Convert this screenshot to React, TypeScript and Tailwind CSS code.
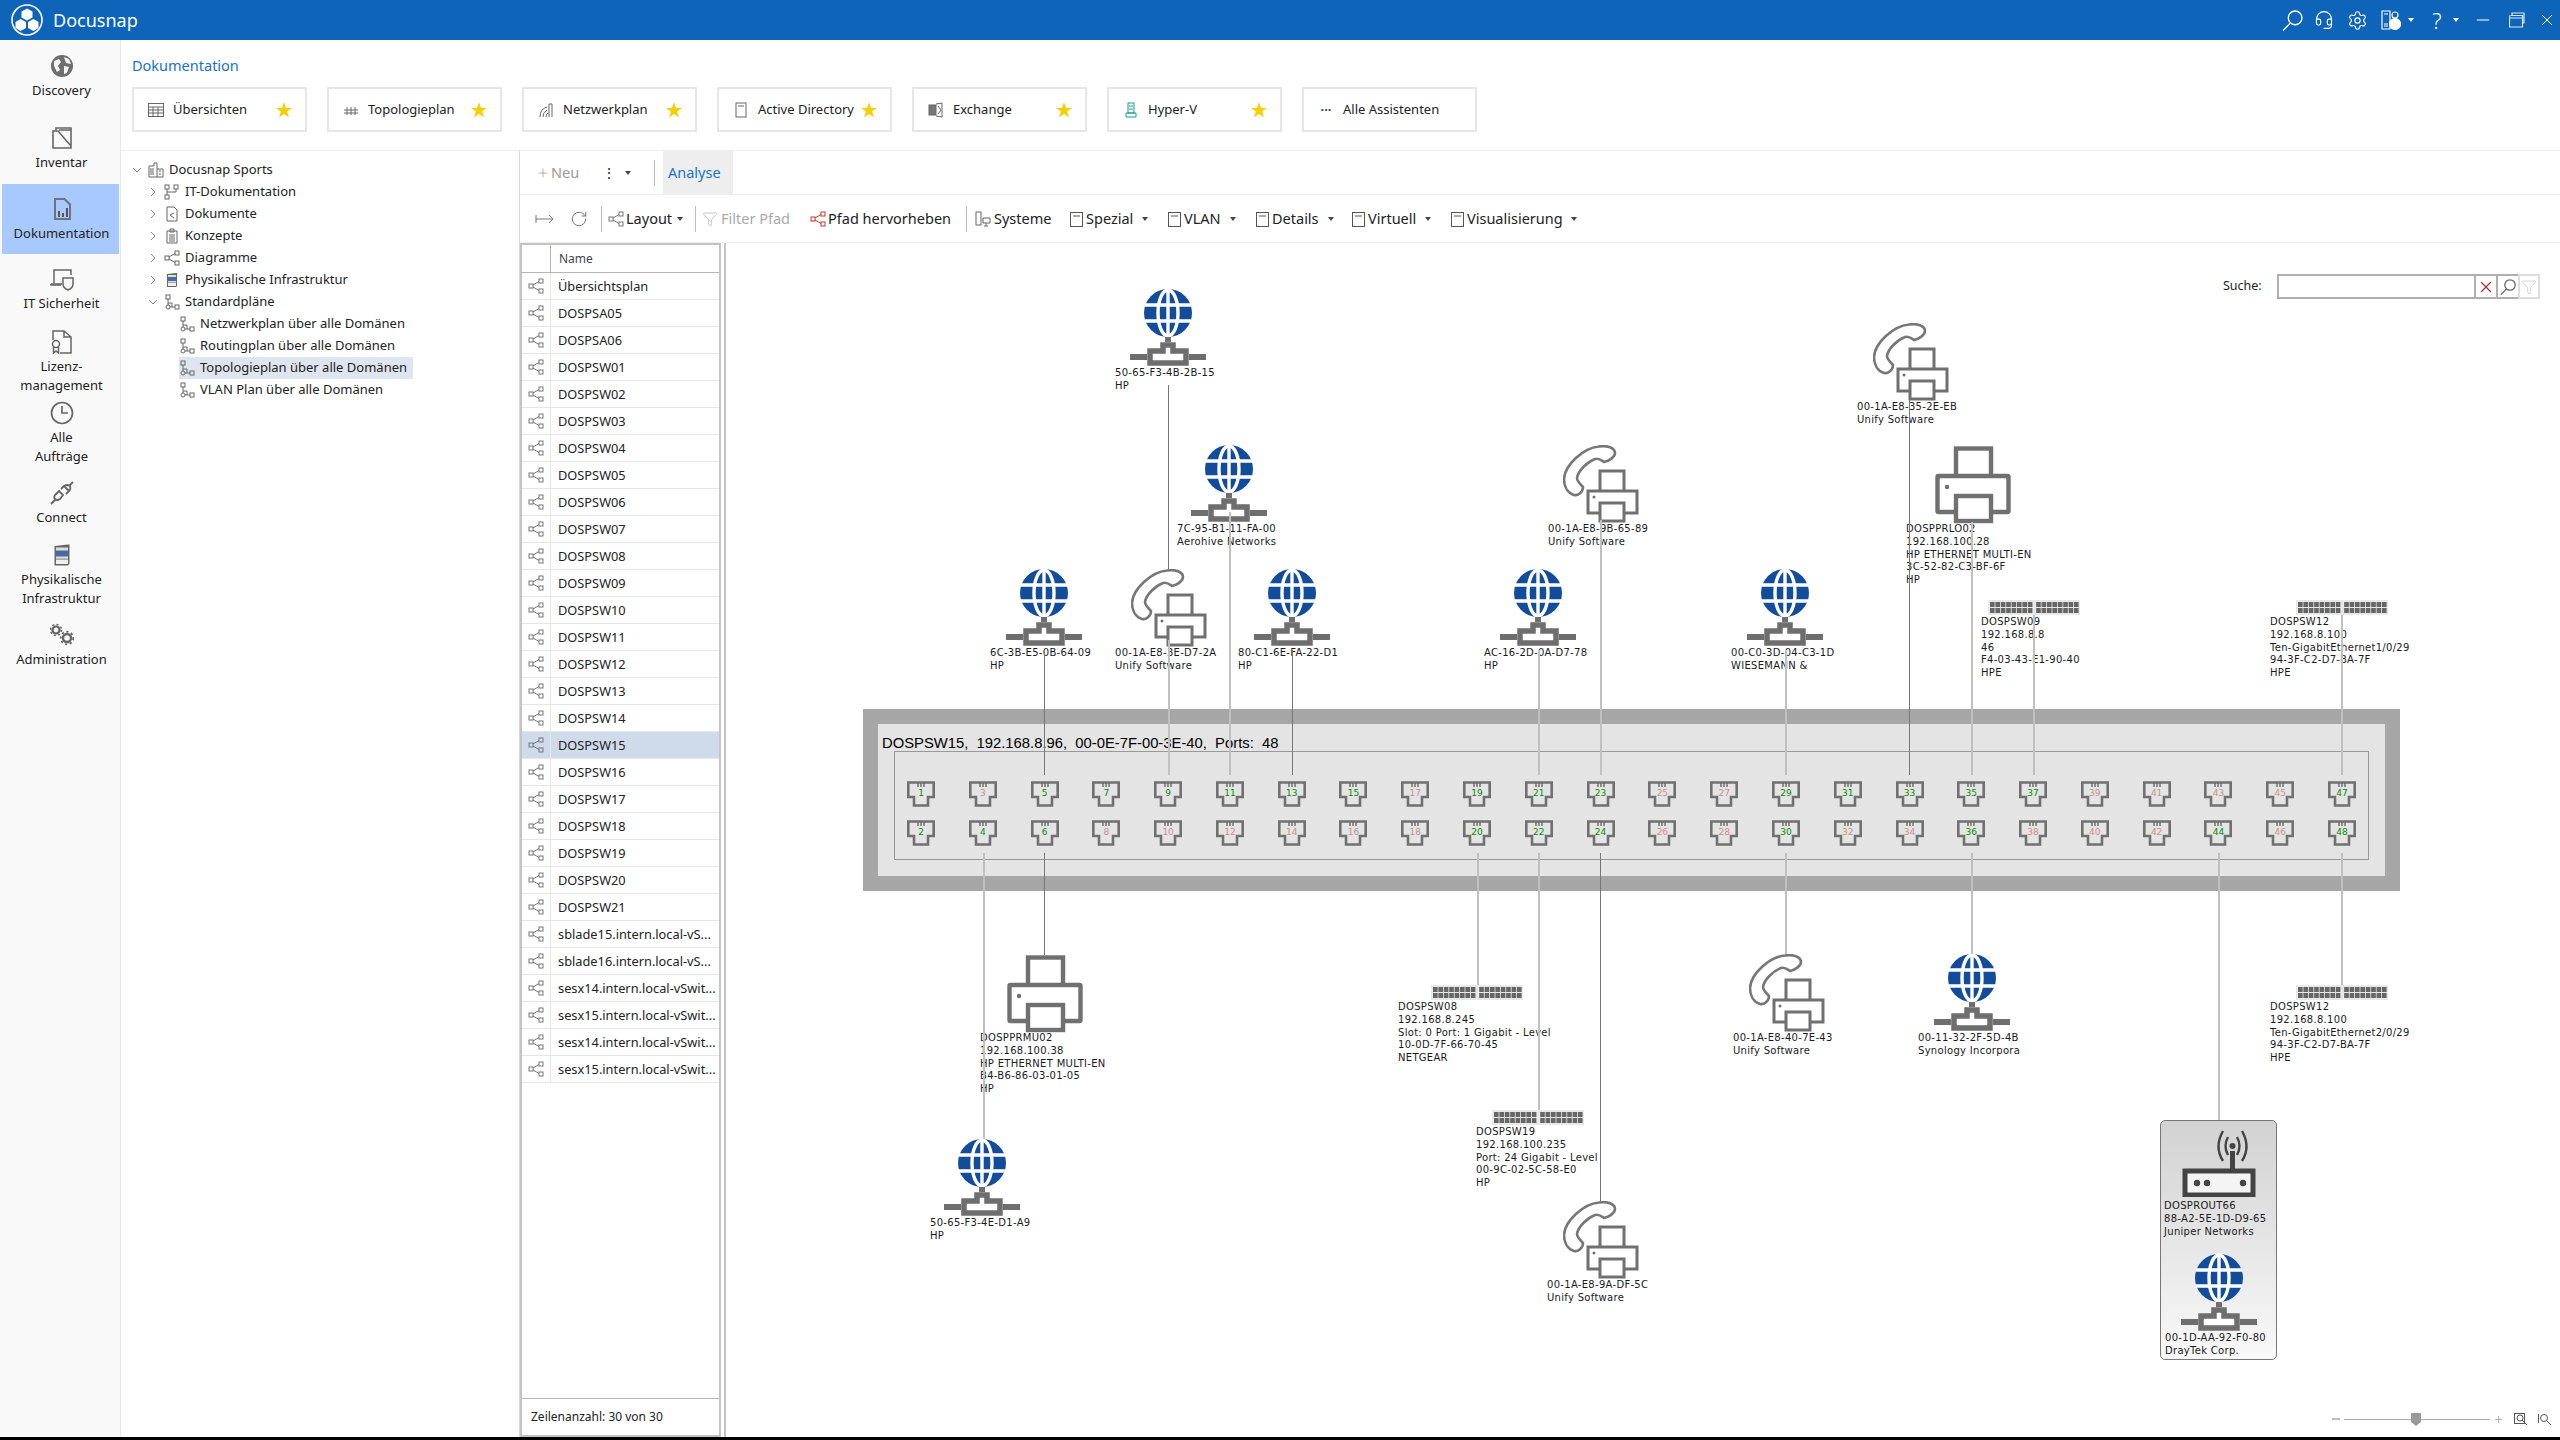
import React from 'react';
import { Headset, Settings, Minus, X, Plus, RotateCw, Filter } from 'lucide-react';

const OX = 726;
const OY = 243;
const labelFont = { fontFamily: '"DejaVu Sans", sans-serif' };

function Ico({ children, size = 16, className = '' }: { children: React.ReactNode; size?: number; className?: string }) {
  return (
    <svg width={size} height={size} viewBox="0 0 16 16" fill="none" stroke="#666" strokeWidth="1" className={`shrink-0 ${className}`}>
      {children}
    </svg>
  );
}

const ShareIco = ({ className = '', color = '#777' }: { className?: string; color?: string }) => (
  <Ico className={className}>
    <g stroke={color}>
      <rect x="1" y="6" width="4" height="4" />
      <rect x="11" y="1" width="4" height="4" />
      <rect x="11" y="11" width="4" height="4" />
      <path d="M5 7 L11 3.5 M5 9 L11 12.5" />
    </g>
  </Ico>
);

const TopoIco = () => (
  <Ico>
    <rect x="2" y="1" width="4" height="4" />
    <circle cx="4" cy="13" r="2" />
    <rect x="11" y="11" width="4" height="4" />
    <path d="M4 5 V11 M6 13 H11 M4 9 H8 V13" />
  </Ico>
);

const RackIco = ({ size = 16 }: { size?: number }) => (
  <svg width={size} height={size} viewBox="0 0 16 16" className="shrink-0">
    <path d="M3 2 L12 1 L13 1 V14 L12 15 H3Z" fill="#666" />
    <rect x="4" y="3" width="8" height="2" fill="#ddd" />
    <rect x="4" y="5.5" width="8" height="3" fill="#3f6db5" />
    <rect x="4" y="9" width="8" height="1.5" fill="#ddd" />
    <rect x="4" y="11" width="8" height="3" fill="#eee" />
  </svg>
);

// magnifier with the glass top right and the handle running down left
const Loupe = ({ size, color, width = 1.3 }: { size: number; color: string; width?: number }) => (
  <svg width={size} height={size} viewBox="0 0 20 20" fill="none" stroke={color} strokeWidth={width}>
    <circle cx="12.5" cy="7.5" r="6.5" />
    <path d="M8 12.5 L1 19.5" />
  </svg>
);

const rail = [
  { h: 'h-[72px]', lines: ['Discovery'], icon: (
    <svg width="24" height="24" viewBox="0 0 24 24"><circle cx="12" cy="12" r="11" fill="#6e6e6e" /><path d="M4 7 L9 5 L11 8 L8 12 L10 16 L7 18 L4 12Z M14 3 L19 5 L21 10 L16 9Z M14 12 L19 13 L17 19 L14 20Z" fill="#f4f4f4" /></svg>
  ) },
  { h: 'h-[71px]', lines: ['Inventar'], icon: (
    <svg width="24" height="24" viewBox="0 0 24 24" fill="none" stroke="#666" strokeWidth="1.6"><path d="M3 22 V5 H8 L21 20 V22Z M6 5 V2 H21 V20 M21 4 H9" /></svg>
  ) },
  { h: 'h-[70px]', active: true, lines: ['Dokumentation'], icon: (
    <svg width="24" height="24" viewBox="0 0 24 24"><path d="M4 1 H15 L21 7 V23 H4Z" fill="#6c7480" /><path d="M6 3 H14 L19 8 V21 H6Z" fill="#a8c9fe" /><path d="M8 14 H10 V20 H8Z M12 16 H14 V20 H12Z M16 11 H18 V20 H16Z" fill="#555" /></svg>
  ) },
  { h: 'h-[63px]', lines: ['IT Sicherheit'], icon: (
    <svg width="24" height="24" viewBox="0 0 24 24" fill="none" stroke="#666" strokeWidth="1.5"><path d="M4 16 V3 H21 V8 M1 17 H12 M1 17 V18 H11 M13 11 H23 V17 Q23 21 18 23 Q13 21 13 17Z" /></svg>
  ) },
  { h: 'h-[71px]', lines: ['Lizenz-', 'management'], icon: (
    <svg width="24" height="24" viewBox="0 0 24 24" fill="none" stroke="#666" strokeWidth="1.5"><path d="M3 10 V1 H14 L21 7 V23 H10 M14 1 V7 H21" /><circle cx="6" cy="14" r="3.5" /><path d="M3.5 17 V23 L6 21 L8.5 23 V17" /></svg>
  ) },
  { h: 'h-[80px]', lines: ['Alle', 'Aufträge'], icon: (
    <svg width="24" height="24" viewBox="0 0 24 24" fill="none" stroke="#666" strokeWidth="1.7"><circle cx="12" cy="12" r="10.5" /><path d="M12 5 V12 H18" /></svg>
  ) },
  { h: 'h-[62px]', lines: ['Connect'], icon: (
    <svg width="24" height="24" viewBox="0 0 24 24" fill="none" stroke="#666" strokeWidth="1.8"><path d="M1 23 L5 19 M23 1 L20 4 M9 10 L13 14 L10 18 Q7 20 5 18 Q3 16 6 13Z M14 5 L19 10 Q21 8 20 5 Q18 3 14 5Z M14 5 L11 8 M19 10 L16 13" /></svg>
  ) },
  { h: 'h-[80px]', lines: ['Physikalische', 'Infrastruktur'], icon: <RackIco size={24} /> },
  { h: 'h-[60px]', lines: ['Administration'], icon: (
    <svg width="24" height="24" viewBox="0 0 24 24" fill="none" stroke="#666"><circle cx="6" cy="7" r="3.5" strokeWidth="2.2" /><circle cx="6" cy="7" r="5.5" strokeWidth="1.6" strokeDasharray="2 2.3" /><circle cx="17" cy="15" r="4" strokeWidth="2.4" /><circle cx="17" cy="15" r="6.3" strokeWidth="1.8" strokeDasharray="2.2 2.5" /></svg>
  ) },
];

const Star = () => (
  <svg width="16" height="16" viewBox="0 0 16 16" className="shrink-0"><path d="M8 0 L10 5.8 L16 6 L11.2 9.6 L13 15.6 L8 12 L3 15.6 L4.8 9.6 L0 6 L6 5.8Z" fill="#f4d00c" /></svg>
);

const tiles = [
  { t: 'Übersichten', i: <Ico><rect x="0.5" y="1.5" width="15" height="13" /><path d="M0.5 5 H15.5 M0.5 8 H15.5 M0.5 11 H15.5 M5 5 V14.5 M10 5 V14.5" /></Ico> },
  { t: 'Topologieplan', i: <Ico><path d="M1 8 H15 M1 11 H15 M4 5 V13 M8 5 V13 M12 5 V13" /></Ico> },
  { t: 'Netzwerkplan', i: <Ico><path d="M2 15 Q2 7 9 5 M5 15 Q5 10 9 8 M8 15 Q8 12 10 11 M11 15 V2 H14 V15" /></Ico> },
  { t: 'Active Directory', i: <Ico><rect x="3" y="1" width="10" height="14" /><path d="M5 4 H11" /></Ico> },
  { t: 'Exchange', i: <Ico><rect x="1" y="3" width="7" height="10" fill="#777" /><path d="M8 2 L14 1 V15 L8 14 M10 4 L13 8 L10 12" /></Ico> },
  { t: 'Hyper-V', i: <Ico><g stroke="#1b9a94"><rect x="5" y="1" width="6" height="10" /><path d="M6 4 H10 M6 7 H10 M3 11 H13 V15 H3Z" /></g></Ico> },
  { t: 'Alle Assistenten', more: true, i: <span className="w-4 text-center font-bold leading-none text-[#444]">···</span> },
];

const tree = [
  { level: 0, chev: 'open', t: 'Docusnap Sports', i: <Ico><path d="M1 15 V4 H6 V1 H9 V15 M9 7 H15 V15 M1 15 H15 M3 6 V13 M5 6 V13 M11 9 H13 M11 12 H13" /></Ico> },
  { level: 1, chev: 'closed', t: 'IT-Dokumentation', i: <Ico><rect x="1" y="1" width="4" height="4" /><rect x="10" y="1" width="4" height="4" /><rect x="1" y="11" width="4" height="4" /><path d="M3 5 V11 M3 8 H12 V5" /></Ico> },
  { level: 1, chev: 'closed', t: 'Dokumente', i: <Ico><path d="M3 1 H10 L13 4 V15 H3Z" /><path d="M6 9 L10 7 M6 9 L10 12" /></Ico> },
  { level: 1, chev: 'closed', t: 'Konzepte', i: <Ico><path d="M3 3 H13 V15 H3Z M6 1 H10 V4 H6Z M5 7 H11 M5 9 H11 M5 11 H11 M5 13 H11" /></Ico> },
  { level: 1, chev: 'closed', t: 'Diagramme', i: <ShareIco color="#666" /> },
  { level: 1, chev: 'closed', t: 'Physikalische Infrastruktur', i: <RackIco /> },
  { level: 1, chev: 'open', t: 'Standardpläne', i: <TopoIco /> },
  { level: 2, t: 'Netzwerkplan über alle Domänen', i: <TopoIco /> },
  { level: 2, t: 'Routingplan über alle Domänen', i: <TopoIco /> },
  { level: 2, sel: true, t: 'Topologieplan über alle Domänen', i: <TopoIco /> },
  { level: 2, t: 'VLAN Plan über alle Domänen', i: <TopoIco /> },
];

const listRows = [
  'Übersichtsplan', 'DOSPSA05', 'DOSPSA06',
  ...Array.from({ length: 21 }, (_, n) => `DOSPSW${String(n + 1).padStart(2, '0')}`),
  'sblade15.intern.local-vS...', 'sblade16.intern.local-vS...', 'sesx14.intern.local-vSwit...',
  'sesx15.intern.local-vSwit...', 'sesx14.intern.local-vSwit...', 'sesx15.intern.local-vSwit...',
];

const green = new Set([1, 2, 4, 5, 6, 7, 9, 11, 13, 15, 19, 20, 21, 22, 23, 24, 29, 30, 31, 33, 35, 36, 37, 44, 47, 48]);

function Port({ n }: { n: number }) {
  return (
    <div className="relative h-[26px] w-[28px]">
      <svg width="28" height="26" viewBox="0 0 28 26" fill="none" stroke="#707070" strokeWidth="2.6">
        <path d="M1.3 1.5 H26.7 V16 H21 V24.5 H7 V16 H1.3Z" />
        <path d="M11 1 V6 M14 1 V6 M17 1 V6" strokeWidth="1.5" />
      </svg>
      <span
        style={labelFont}
        className={`absolute inset-x-0 top-[6px] text-center text-[9px] leading-[13px] ${green.has(n) ? 'text-[#078a07]' : 'text-[#c09292]'}`}
      >
        {n}
      </span>
    </div>
  );
}

// lines: x, from y, to y, dark = the thin darker ones
const lines = [
  { x: 1168, a: 385, b: 569, dark: true },
  { x: 1168, a: 640, b: 775 },
  { x: 1229, a: 512, b: 775 },
  { x: 1292, a: 650, b: 775, dark: true },
  { x: 1044, a: 650, b: 775, dark: true },
  { x: 1538, a: 650, b: 775 },
  { x: 1600, a: 520, b: 775 },
  { x: 1785, a: 650, b: 775 },
  { x: 1909, a: 400, b: 775, dark: true },
  { x: 1971, a: 522, b: 775 },
  { x: 2033, a: 615, b: 775 },
  { x: 2341, a: 615, b: 775 },
  { x: 983, a: 853, b: 1139 },
  { x: 1044, a: 853, b: 955, dark: true },
  { x: 1477, a: 853, b: 985 },
  { x: 1538, a: 853, b: 1110 },
  { x: 1600, a: 853, b: 1201, dark: true },
  { x: 1785, a: 853, b: 954 },
  { x: 1971, a: 853, b: 954 },
  { x: 2218, a: 853, b: 1120 },
  { x: 2341, a: 853, b: 985 },
];

function Label({ x, y, lines: text }: { x: number; y: number; lines: string[] }) {
  return (
    <div
      style={{ ...labelFont, left: x - OX, top: y - OY - 5 }}
      className="absolute whitespace-nowrap text-[10px] leading-[12.8px] tracking-[0.3px] text-[#1a1a1a]"
    >
      {text.map((t) => (
        <div key={t}>{t}</div>
      ))}
    </div>
  );
}

function GlobeGlyph() {
  return (
    <svg width="80" height="80" viewBox="-40 -26 80 80" className="block">
      <circle r="24" fill="#144c9c" />
      <g fill="none" stroke="#fff" strokeWidth="3.4">
        <ellipse rx="10" ry="23" />
        <path d="M0 -24 V24 M-23 -8 H23 M-23 8 H23" />
      </g>
      <g stroke="#6e6e6e" fill="none">
        <path d="M-3 24 H3 V29 H-3Z" fill="#6e6e6e" strokeWidth="0" />
        <path d="M-38 44 H-21 M21 44 H38" strokeWidth="6" />
        <path d="M-18 50 V38 H-5 V32 H5 V38 H18 V50Z" strokeWidth="5.5" fill="#fff" />
      </g>
    </svg>
  );
}

function Globe({ cx, cy, text, lx }: { cx: number; cy: number; text: string[]; lx: number }) {
  return (
    <>
      <div style={{ left: cx - 40 - OX, top: cy - 26 - OY }} className="absolute">
        <GlobeGlyph />
      </div>
      <Label x={lx} y={cy + 59} lines={text} />
    </>
  );
}

function PhonePrinter({ cx, top, text, lx }: { cx: number; top: number; text: string[]; lx: number }) {
  return (
    <>
      <svg width="76" height="78" viewBox="0 0 76 78" style={{ left: cx - 37 - OX, top: top - OY }} className="absolute">
        <path
          d="M36 1.5 C44 0 52 3 52 8 C52 12 46 16 41 17 C38 15 36 13 32 14 C24 17 15 26 14 33 C14 36 17 39 20 42 C20 47 15 51 11 50 C5 48 1 42 1 34 C2 20 20 3 36 1.5Z"
          fill="#fff"
          stroke="#777"
          strokeWidth="2.6"
        />
        <g fill="#fff" stroke="#707070" strokeWidth="3">
          <rect x="37" y="26" width="24" height="22" />
          <rect x="25" y="46" width="49" height="22" />
          <rect x="37" y="58" width="24" height="18" />
        </g>
        <circle cx="31" cy="52" r="1.5" fill="#707070" />
      </svg>
      <Label x={lx} y={top + 83} lines={text} />
    </>
  );
}

function Printer({ x, y, text, lx }: { x: number; y: number; text: string[]; lx: number }) {
  return (
    <>
      <svg width="76" height="78" viewBox="0 0 76 78" style={{ left: x - OX, top: y - OY }} className="absolute">
        <g fill="#fff" stroke="#707070" strokeWidth="4.4">
          <rect x="21" y="2.5" width="35" height="30" />
          <rect x="2.5" y="30" width="71" height="36" rx="1" />
          <rect x="21" y="50" width="35" height="25" />
        </g>
        <circle cx="12" cy="41" r="2.2" fill="#707070" />
      </svg>
      <Label x={lx} y={y + 82} lines={text} />
    </>
  );
}

function MiniSwitch({ x, y, text, lx }: { x: number; y: number; text: string[]; lx: number }) {
  const dots = Array.from({ length: 16 }, (_, i) => i);
  return (
    <>
      <svg width="92" height="15" viewBox="0 0 92 15" style={{ left: x - OX, top: y - OY }} className="absolute">
        <rect width="92" height="15" fill="#e8e8e8" />
        {dots.map((i) => {
          const dx = 2 + i * 5.4 + (i >= 8 ? 3 : 0);
          return (
            <g key={i} fill="#666">
              <rect x={dx} y="2" width="4.6" height="5" />
              <rect x={dx} y="8" width="4.6" height="5" />
            </g>
          );
        })}
      </svg>
      <Label x={lx} y={y + 21} lines={text} />
    </>
  );
}

function Tool({ className, children }: { className: string; children: React.ReactNode }) {
  return <div className={`flex h-full shrink-0 items-center ${className}`}>{children}</div>;
}

const Caret = ({ className = '' }: { className?: string }) => (
  <span className={`h-0 w-0 border-x-[3px] border-t-[4px] border-x-transparent border-t-[#444] ${className}`} />
);

const BoxIco = () => (
  <svg width="13" height="16" viewBox="0 0 13 16" fill="none" stroke="#555" className="shrink-0">
    <rect x="0.5" y="1.5" width="12" height="14" />
    <path d="M3 5 H10" />
  </svg>
);

const Sep = () => <div className="h-[26px] w-px shrink-0 bg-[#bbb]" />;

export default function App() {
  return (
    <div
      style={{ fontFamily: '"Noto Sans", sans-serif' }}
      className="flex h-[1440px] w-[2560px] flex-col overflow-hidden bg-white text-[13px] text-[#222]"
    >
      {/* Title bar */}
      <header className="flex h-10 shrink-0 items-center bg-[#0d64b9] text-white">
        <svg width="32" height="32" viewBox="0 0 32 32" className="ml-[11px]">
          <circle cx="16" cy="16" r="15" fill="none" stroke="#fff" strokeWidth="1.6" />
          <path d="M16 4.5 L21.5 7.5 V13.5 L16 16.5 L10.5 13.5 V7.5Z M9.5 15 L15 18 V24 L9.5 27 L4.5 24 V18Z M22.5 15 L27.5 18 V24 L22.5 27 L17 24 V18Z" fill="#fff" />
        </svg>
        <span className="ml-[10px] text-[18px] leading-none">Docusnap</span>
        <div className="ml-auto flex h-full items-center">
          <div className="flex w-[32px] justify-center"><Loupe size={21} color="#fff" /></div>
          <div className="flex w-[32px] justify-center"><Headset size={20} strokeWidth={1.4} /></div>
          <div className="flex w-[34px] justify-center"><Settings size={21} strokeWidth={1.3} /></div>
          <div className="flex w-[34px] justify-center">
            <svg width="20" height="20" viewBox="0 0 20 20" fill="none" stroke="#fff" strokeWidth="1.2">
              <path d="M1 1 H9 V19 H1Z M3 4 H7 M3 14 H7 M3 16 H7" />
              <circle cx="14" cy="5" r="3" />
              <circle cx="14" cy="14" r="5.5" fill="#fff" />
            </svg>
          </div>
          <Caret className="mr-[15px] border-t-white" />
          <span className="w-[16px] text-center text-[22px] font-light leading-none">?</span>
          <Caret className="ml-[8px] border-t-white" />
          <div className="ml-[7px] flex w-[34px] justify-center"><Minus size={20} strokeWidth={1.2} /></div>
          <div className="flex w-[34px] justify-center">
            <svg width="16" height="16" viewBox="0 0 16 16" fill="none" stroke="#d7e4f3" strokeWidth="1.2">
              <path d="M3 3 V1 H15 V11 H13 M1.5 3.5 H13.5 V15 H0.5 V3.5 M0.5 6 H13.5" />
            </svg>
          </div>
          <div className="flex w-[26px] justify-center"><X size={18} strokeWidth={1.3} /></div>
        </div>
      </header>

      <div className="flex min-h-0 flex-1">
        {/* Left rail */}
        <nav className="flex w-[121px] shrink-0 flex-col border-r border-[#e8e8e8] bg-[#f9f9f9] pt-px">
          {rail.map((r) => (
            <div
              key={r.lines[0]}
              className={`ml-[2px] mr-px flex shrink-0 flex-col items-center pl-[2px] pt-[13px] text-center leading-[19px] text-[#222] ${r.h} ${r.active ? 'bg-[#a8c9fe]' : ''}`}
            >
              <div className="mb-[3px] h-6">{r.icon}</div>
              {r.lines.map((l) => (
                <div key={l} className="whitespace-nowrap">{l}</div>
              ))}
            </div>
          ))}
        </nav>

        <main className="flex min-w-0 flex-1 flex-col">
          {/* Tiles */}
          <section className="h-[110px] shrink-0 pl-[11px]">
            <h1 className="pt-[14px] text-[14.5px] leading-[22px] text-[#1873c9]">Dokumentation</h1>
            <div className="mt-[11px] flex gap-5">
              {tiles.map((t) => (
                <div key={t.t} className="flex h-[45px] w-[175px] items-center border-2 border-[#e6e6e6] pl-[14px] pr-[13px]">
                  {t.i}
                  <span className="ml-[9px] flex-1 whitespace-nowrap">{t.t}</span>
                  {!t.more && <Star />}
                </div>
              ))}
            </div>
          </section>

          <div className="flex min-h-0 flex-1 border-t border-[#eee]">
            {/* Tree */}
            <aside className="w-[398px] shrink-0 pt-[8px]">
              {tree.map((n) => (
                <div key={n.t} className="flex h-[22px] items-center">
                  <div className={`flex h-full items-center ${n.level === 0 ? 'pl-[10px]' : n.level === 1 ? 'pl-[26px]' : 'pl-[58px]'}`}>
                    {n.level < 2 && (
                      <svg width="12" height="12" viewBox="0 0 12 12" fill="none" stroke="#888" className="mr-[5px]">
                        {n.chev === 'open' ? <path d="M2 4 L6 8 L10 4" /> : <path d="M4 2 L8 6 L4 10" />}
                      </svg>
                    )}
                    <div className={`flex h-full items-center whitespace-nowrap pr-[6px] ${n.sel ? 'bg-[#dfe5ef]' : ''}`}>
                      {n.i}
                      <span className="ml-[5px] text-[13px]">{n.t}</span>
                    </div>
                  </div>
                </div>
              ))}
            </aside>

            <div className="flex min-w-0 flex-1 flex-col border-l border-[#d8d8d8]">
              {/* Toolbar 1 */}
              <div className="flex h-[44px] shrink-0 items-center border-b border-[#eee] pl-[16px] text-[14.5px]">
                <Tool className="w-[58px] text-[#999]"><Plus size={14} strokeWidth={1.2} className="mr-px" />Neu</Tool>
                <Tool className="w-[60px] pl-[8px]">
                  <span className="w-[14px] text-center text-[14px] leading-none">⋮</span>
                  <Caret className="ml-[9px]" />
                </Tool>
                <Sep />
                <div className="ml-[8px] flex h-full w-[70px] items-center bg-[#eeeeee] pl-[5px] text-[#1873c9]">Analyse</div>
              </div>

              {/* Toolbar 2 */}
              <div className="flex h-[48px] shrink-0 items-center border-b border-[#eee] pl-[15px] pt-px text-[14.5px]">
                <Tool className="w-[30px]">
                  <svg width="20" height="12" viewBox="0 0 20 12" fill="none" stroke="#777"><path d="M1 2 V10 M1 6 H18 M14 2 L18 6 L14 10" /></svg>
                </Tool>
                <Tool className="w-[36px] pl-[5px]"><RotateCw size={18} strokeWidth={1.2} color="#666" /></Tool>
                <Sep />
                <Tool className="ml-[6px] w-[87px]"><ShareIco /><span className="ml-[2px]">Layout</span><Caret className="ml-[5px]" /></Tool>
                <Sep />
                <Tool className="ml-[6px] w-[106px] text-[#aaa]"><Filter size={16} strokeWidth={1} className="mr-[3px]" />Filter Pfad</Tool>
                <Tool className="ml-[2px] w-[156px]"><ShareIco color="#c0392b" /><span className="ml-[2px]">Pfad hervorheben</span></Tool>
                <Sep />
                <Tool className="ml-[8px] w-[95px]">
                  <svg width="16" height="16" viewBox="0 0 16 16" fill="none" stroke="#666" className="shrink-0"><rect x="1" y="1" width="5" height="13" /><path d="M8 7 H15 V12 H8Z M11 12 V15 M9 15 H13" /></svg>
                  <span className="ml-[3px]">Systeme</span>
                </Tool>
                <Tool className="w-[98px]"><BoxIco /><span className="ml-[3px]">Spezial</span><Caret className="ml-[9px]" /></Tool>
                <Tool className="w-[88px]"><BoxIco /><span className="ml-[3px]">VLAN</span><Caret className="ml-[9px]" /></Tool>
                <Tool className="w-[96px]"><BoxIco /><span className="ml-[3px]">Details</span><Caret className="ml-[9px]" /></Tool>
                <Tool className="w-[99px]"><BoxIco /><span className="ml-[3px]">Virtuell</span><Caret className="ml-[9px]" /></Tool>
                <Tool className="w-[130px]"><BoxIco /><span className="ml-[3px]">Visualisierung</span><Caret className="ml-[8px]" /></Tool>
              </div>

              <div className="flex min-h-0 flex-1">
                {/* List */}
                <div className="flex w-[201px] shrink-0 flex-col border-2 border-[#c4c4c4]">
                  <div className="flex h-[28px] shrink-0 border-b border-[#b5b5b5] text-[12px] text-[#444]">
                    <div className="w-[29px] border-r border-[#b5b5b5]" />
                    <div className="flex items-center pl-[8px]">Name</div>
                  </div>
                  {listRows.map((name, i) => (
                    <div key={`${name}-${i}`} className={`flex h-[27px] shrink-0 items-center border-b border-[#e6e6e6] ${name === 'DOSPSW15' ? 'bg-[#cfdaea]' : ''}`}>
                      <div className="flex h-full w-[29px] shrink-0 items-center justify-center border-r border-[#e6e6e6]"><ShareIco /></div>
                      <span className="overflow-hidden whitespace-nowrap pl-[7px] pt-[2px] text-[12.8px]">{name}</span>
                    </div>
                  ))}
                  <div className="mt-auto flex h-[37px] items-center border-t border-[#b5b5b5] pl-[9px] text-[12px]">Zeilenanzahl: 30 von 30</div>
                </div>

                {/* Diagram */}
                <div className="relative ml-[3px] min-w-0 flex-1 border-l-2 border-[#c4c4c4]">
                  <div className="absolute inset-0">
                    <Globe cx={1168} cy={313} lx={1115} text={['50-65-F3-4B-2B-15', 'HP']} />
                    <Globe cx={1229} cy={469} lx={1177} text={['7C-95-B1-11-FA-00', 'Aerohive Networks']} />
                    <Globe cx={1044} cy={593} lx={990} text={['6C-3B-E5-0B-64-09', 'HP']} />
                    <Globe cx={1292} cy={593} lx={1238} text={['80-C1-6E-FA-22-D1', 'HP']} />
                    <Globe cx={1538} cy={593} lx={1484} text={['AC-16-2D-0A-D7-78', 'HP']} />
                    <Globe cx={1785} cy={593} lx={1731} text={['00-C0-3D-04-C3-1D', 'WIESEMANN &']} />
                    <Globe cx={1972} cy={978} lx={1918} text={['00-11-32-2F-5D-4B', 'Synology Incorpora']} />
                    <Globe cx={982} cy={1163} lx={930} text={['50-65-F3-4E-D1-A9', 'HP']} />

                    <PhonePrinter cx={1168} top={569} lx={1115} text={['00-1A-E8-3E-D7-2A', 'Unify Software']} />
                    <PhonePrinter cx={1910} top={323} lx={1857} text={['00-1A-E8-35-2E-EB', 'Unify Software']} />
                    <PhonePrinter cx={1600} top={445} lx={1548} text={['00-1A-E8-9B-65-89', 'Unify Software']} />
                    <PhonePrinter cx={1786} top={954} lx={1733} text={['00-1A-E8-40-7E-43', 'Unify Software']} />
                    <PhonePrinter cx={1600} top={1201} lx={1547} text={['00-1A-E8-9A-DF-5C', 'Unify Software']} />

                    <Printer x={1935} y={446} lx={1906} text={['DOSPPRLO02', '192.168.100.28', 'HP ETHERNET MULTI-EN', '3C-52-82-C3-BF-6F', 'HP']} />
                    <Printer x={1007} y={955} lx={980} text={['DOSPPRMU02', '192.168.100.38', 'HP ETHERNET MULTI-EN', 'B4-B6-86-03-01-05', 'HP']} />

                    <MiniSwitch x={1988} y={600} lx={1981} text={['DOSPSW09', '192.168.8.8', '46', 'F4-03-43-E1-90-40', 'HPE']} />
                    <MiniSwitch x={2296} y={600} lx={2270} text={['DOSPSW12', '192.168.8.100', 'Ten-GigabitEthernet1/0/29', '94-3F-C2-D7-BA-7F', 'HPE']} />
                    <MiniSwitch x={1431} y={985} lx={1398} text={['DOSPSW08', '192.168.8.245', 'Slot: 0 Port: 1 Gigabit - Level', '10-0D-7F-66-70-45', 'NETGEAR']} />
                    <MiniSwitch x={1492} y={1110} lx={1476} text={['DOSPSW19', '192.168.100.235', 'Port: 24 Gigabit - Level', '00-9C-02-5C-58-E0', 'HP']} />
                    <MiniSwitch x={2296} y={985} lx={2270} text={['DOSPSW12', '192.168.8.100', 'Ten-GigabitEthernet2/0/29', '94-3F-C2-D7-BA-7F', 'HPE']} />

                    {/* Central switch */}
                    <div style={{ left: 863 - OX, top: 709 - OY }} className="absolute h-[182px] w-[1537px] bg-[#a6a6a6] p-[15px]">
                      <div className="flex h-full flex-col bg-[#e4e4e4] px-[16px]">
                        <div className="-ml-[12px] h-[27px] whitespace-pre text-[14.8px] leading-[38px] text-black" style={{ fontFamily: '"Liberation Sans", sans-serif' }}>
                          DOSPSW15,  192.168.8.96,  00-0E-7F-00-3E-40,  Ports:  48
                        </div>
                        <div className="grid h-[109px] grid-flow-col grid-cols-[repeat(24,28px)] grid-rows-[26px_26px] content-start justify-between gap-y-[13px] border border-[#999] px-[12px] pt-[29px]">
                          {Array.from({ length: 48 }, (_, i) => (
                            <Port key={i} n={i + 1} />
                          ))}
                        </div>
                      </div>
                    </div>

                    {/* Gateway group */}
                    <div style={{ left: 2160 - OX, top: 1120 - OY }} className="absolute h-[240px] w-[117px] rounded-[5px] border border-[#777] bg-gradient-to-b from-[#d2d2d2] to-[#f9f9f9]">
                      <svg width="76" height="70" viewBox="0 0 76 70" className="absolute left-[21px] top-[6px]">
                        <g fill="none" stroke="#444" strokeWidth="2.4">
                          <path d="M41 4 Q32 20 41 34 M60 4 Q69 20 60 34 M46 10 Q41 19 46 28 M55 10 Q60 19 55 28" />
                        </g>
                        <circle cx="50.5" cy="19" r="3" fill="#444" />
                        <rect x="48" y="24" width="5" height="22" fill="#444" />
                        <rect x="3" y="44" width="68" height="24" fill="#f4f4f4" stroke="#444" strokeWidth="5" />
                        <circle cx="15" cy="56" r="3.2" fill="#444" />
                        <circle cx="25" cy="56" r="3.2" fill="#444" />
                        <circle cx="61" cy="56" r="3.2" fill="#444" />
                      </svg>
                    </div>
                    <Label x={2164} y={1205} lines={['DOSPROUT66', '88-A2-5E-1D-D9-65', 'Juniper Networks']} />
                    <Globe cx={2219} cy={1278} lx={2165} text={['00-1D-AA-92-F0-80', 'DrayTek Corp.']} />

                    {/* Connection lines run over the switch frame and the labels */}
                    {lines.map((l) => (
                      <div
                        key={`${l.x}-${l.a}`}
                        style={{ left: l.x - OX, top: l.a - OY, height: l.b - l.a }}
                        className={`absolute ${l.dark ? 'w-px bg-[#777]' : 'w-[2px] bg-[#c0c0c0]'}`}
                      />
                    ))}

                    {/* Search */}
                    <div className="absolute left-[1497px] top-[31px] flex h-[25px] items-center">
                      <span className="w-[54px] text-[12.5px]">Suche:</span>
                      <div className="flex h-[25px] w-[263px]">
                        <div className="flex-1 border-2 border-r-0 border-[#b0b0b0]" />
                        <div className="flex w-[22px] items-center justify-center border-2 border-r-0 border-[#b0b0b0]"><X size={18} color="#c12a2a" strokeWidth={1.6} /></div>
                        <div className="flex w-[22px] items-center justify-center border-2 border-r-0 border-[#b0b0b0]"><Loupe size={16} color="#666" width={1.6} /></div>
                        <div className="flex w-[22px] items-center justify-center border-2 border-[#ddd]"><Filter size={16} color="#ccc" strokeWidth={1.2} /></div>
                      </div>
                    </div>

                    {/* Zoom slider */}
                    <div className="absolute bottom-[10px] right-[8px] flex h-4 w-[220px] items-center">
                      <div className="h-[2px] w-[8px] bg-[#bbb]" />
                      <div className="relative ml-[4px] h-px w-[146px] bg-[#aaa]">
                        <svg width="10" height="13" viewBox="0 0 10 13" className="absolute left-[67px] top-[-6px]"><path d="M0 0 H10 V9 L5 13 L0 9Z" fill="#999" /></svg>
                      </div>
                      <Plus size={11} color="#aaa" strokeWidth={2} className="ml-[3px]" />
                      <svg width="14" height="14" viewBox="0 0 14 14" fill="none" stroke="#555" className="ml-[10px]"><rect x="0.5" y="1.5" width="10" height="10" /><circle cx="6" cy="6" r="3" /><path d="M8 8 L13 13" /></svg>
                      <svg width="14" height="14" viewBox="0 0 14 14" fill="none" stroke="#555" className="ml-[10px]"><path d="M0.5 2 V11" /><circle cx="6" cy="6" r="3.5" /><path d="M8.5 8.5 L13 13" /></svg>
                    </div>
                  </div>
                </div>
              </div>
            </div>
          </div>
        </main>
      </div>
      <div className="h-[3px] shrink-0 bg-black" />
    </div>
  );
}
